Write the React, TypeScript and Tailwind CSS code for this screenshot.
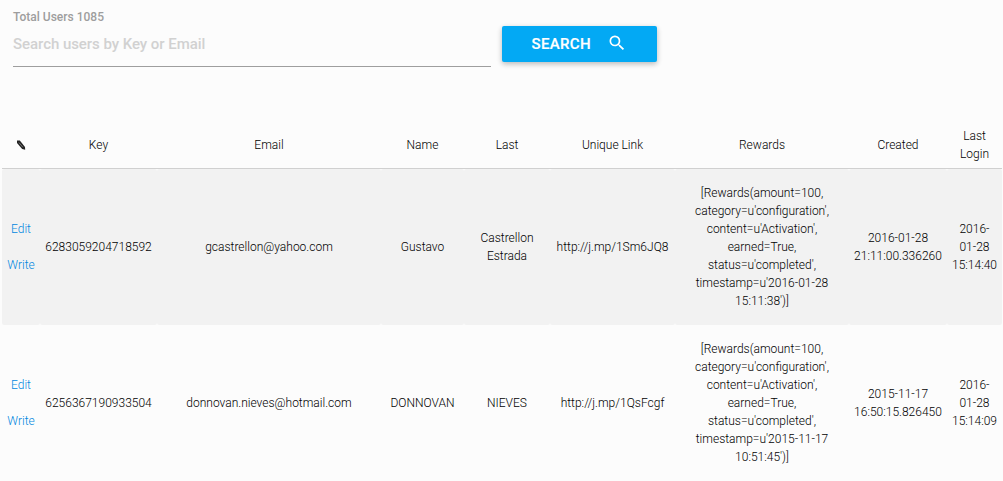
type User = {
  key: string;
  email: string;
  name: string;
  last: string[];
  link: string;
  rewards: string[];
  created: string[];
  login: string[];
};

const rewards = (date: string, time: string) => [
  "[Rewards(amount=100,",
  "category=u'configuration',",
  "content=u'Activation',",
  "earned=True,",
  "status=u'completed',",
  `timestamp=u'${date}`,
  `${time}')]`,
];

const users: User[] = [
  {
    key: "6283059204718592",
    email: "gcastrellon@yahoo.com",
    name: "Gustavo",
    last: ["Castrellon", "Estrada"],
    link: "http://j.mp/1Sm6JQ8",
    rewards: rewards("2016-01-28", "15:11:38"),
    created: ["2016-01-28", "21:11:00.336260"],
    login: ["2016-", "01-28", "15:14:40"],
  },
  {
    key: "6256367190933504",
    email: "donnovan.nieves@hotmail.com",
    name: "DONNOVAN",
    last: ["NIEVES"],
    link: "http://j.mp/1QsFcgf",
    rewards: rewards("2015-11-17", "10:51:45"),
    created: ["2015-11-17", "16:50:15.826450"],
    login: ["2016-", "01-28", "15:14:09"],
  },
];

const headers = [["✎"], ["Key"], ["Email"], ["Name"], ["Last"], ["Unique Link"], ["Rewards"], ["Created"], ["Last", "Login"]];

function Lines({ lines }: { lines: string[] }) {
  return (
    <>
      {lines.map((line) => (
        <div key={line} className="whitespace-nowrap">
          {line}
        </div>
      ))}
    </>
  );
}

function PencilIcon() {
  return (
    <svg viewBox="0 0 10 10" className="mx-auto size-[10px]">
      <path d="M1 .6 3.8.4 9 7 9.2 9.7 6.2 9.1 1 3Z" fill="#222" />
      <path d="M3 2.6 6.8 7.2" stroke="#888" strokeWidth=".8" />
    </svg>
  );
}

export default function App() {
  return (
    <div className="h-[481px] w-[1003px] overflow-hidden bg-[#fcfcfc] font-['Roboto',sans-serif] text-black">
      <div className="flex h-[122px] items-start pl-[13px]">
        <div className="w-[478px] pt-2">
          <label htmlFor="search" className="block h-[18px] text-xs leading-[18px] font-medium text-[#9e9e9e]">
            Total Users 1085
          </label>
          <input
            id="search"
            placeholder="Search users by Key or Email"
            className="block h-[41px] w-full border-b border-[#9e9e9e] bg-transparent pb-[5px] text-[15px] font-medium tracking-[-0.05px] outline-none placeholder:text-[#d1d1d1]"
          />
        </div>
        <button className="mt-[26px] ml-[11px] flex h-9 w-[155px] items-center rounded-[2px] bg-[#03a9f4] pl-[29.5px] text-[15px] font-medium text-white shadow-[0_2px_5px_0_rgba(0,0,0,0.16),0_2px_6px_0_rgba(0,0,0,0.12)]">
          <span className="w-[75px] text-left tracking-[0.35px] [-webkit-text-stroke:0.2px_white]">SEARCH</span>
          <svg viewBox="0 0 24 24" className="mb-[2px] size-5" fill="currentColor">
            <path d="M15.5 14h-.79l-.28-.27A6.471 6.471 0 0 0 16 9.5 6.5 6.5 0 1 0 9.5 16c1.61 0 3.09-.59 4.23-1.57l.27.28v.79l5 4.99L20.49 19l-4.99-5zm-6 0C7.01 14 5 11.99 5 9.5S7.01 5 9.5 5 14 7.01 14 9.5 11.99 14 9.5 14z" />
          </svg>
        </button>
      </div>
      <table className="ml-[2px] w-[1000px] table-fixed border-separate border-spacing-0 text-center text-xs leading-[18px] font-light">
        <colgroup>
          <col className="w-[38px]" />
          <col className="w-[117px]" />
          <col className="w-[224px]" />
          <col className="w-[83px]" />
          <col className="w-[86px]" />
          <col className="w-[125px]" />
          <col className="w-[174px]" />
          <col className="w-[98px]" />
          <col className="w-[55px]" />
        </colgroup>
        <thead>
          <tr className="h-[47px]">
            {headers.map((header, i) => (
              <th key={i} className="border-b border-[#d0d0d0] p-0 align-middle font-light">
                {i === 0 ? <PencilIcon /> : <Lines lines={header} />}
              </th>
            ))}
          </tr>
        </thead>
        <tbody className="[&_td]:rounded-[2px] [&_td]:p-0 [&_td]:align-middle">
          {users.map((user) => (
            <tr key={user.key} className="h-[156px] odd:[&>td]:bg-[#f2f2f2]">
              <td>
                <a href="#edit" className="block text-[#0288e0]">Edit</a>
                <a href="#write" className="mt-[18px] block text-[#0288e0]">Write</a>
              </td>
              <td>{user.key}</td>
              <td>{user.email}</td>
              <td>{user.name}</td>
              <td><Lines lines={user.last} /></td>
              <td>{user.link}</td>
              <td><Lines lines={user.rewards} /></td>
              <td><Lines lines={user.created} /></td>
              <td><Lines lines={user.login} /></td>
            </tr>
          ))}
        </tbody>
      </table>
    </div>
  );
}
